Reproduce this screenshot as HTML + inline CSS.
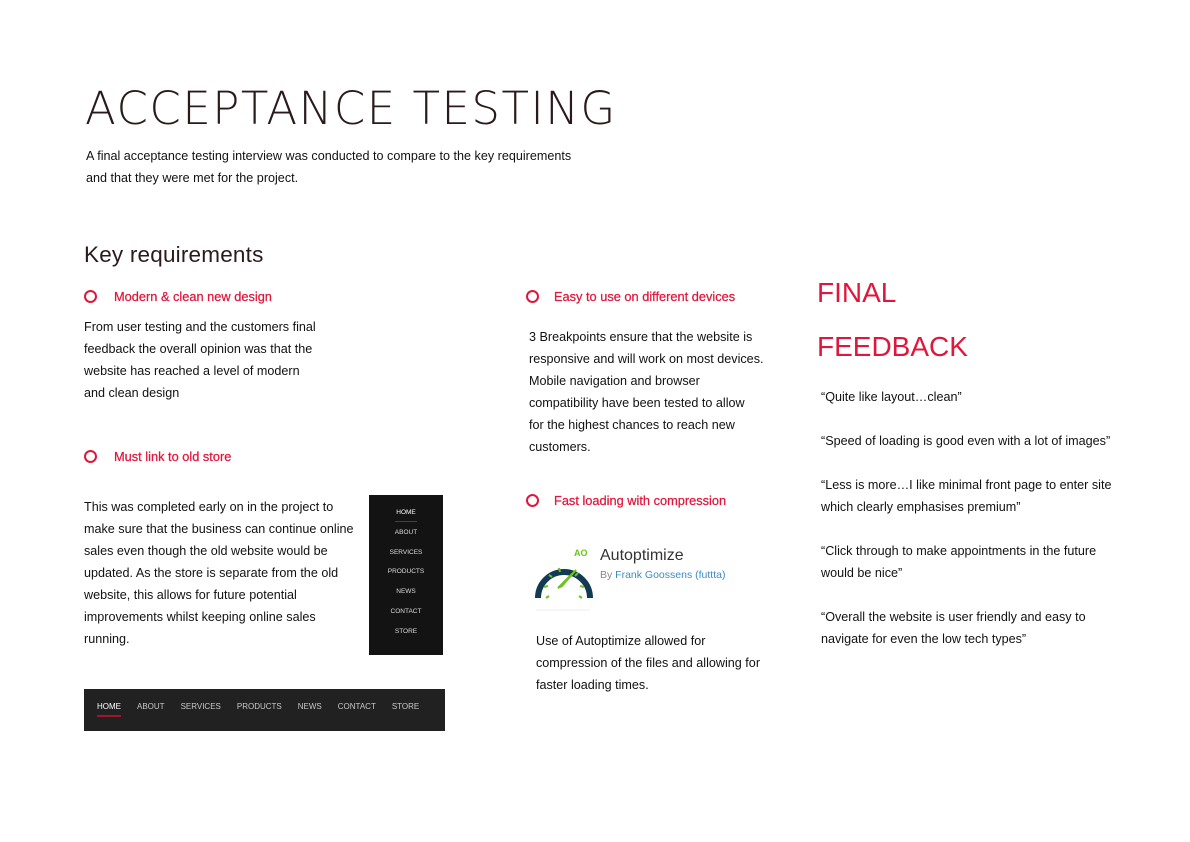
<!DOCTYPE html>
<html><head><meta charset="utf-8"><style>
*{margin:0;padding:0;box-sizing:border-box}
body{width:1190px;height:842px;background:#fff;position:relative;font-family:"Liberation Sans",sans-serif;color:#111;overflow:hidden}
.a{position:absolute}
.t{font-size:12.6px;line-height:22px;color:#111;white-space:nowrap}
h1{position:absolute;left:85px;top:82px;font-family:"DejaVu Sans",sans-serif;font-weight:200;font-size:45px;letter-spacing:1.5px;color:#2a1a1c;line-height:54px;white-space:nowrap}
.h2{font-family:"Liberation Sans",sans-serif;font-size:22.5px;color:#2a1a1c;letter-spacing:0.2px}
.b{font-size:12.8px;color:#e0173c;white-space:nowrap;-webkit-text-stroke:0.25px #e0173c}
.c{position:absolute;width:13px;height:13px;border:2px solid #e0173c;border-radius:50%}
.fb{font-family:"Liberation Sans",sans-serif;color:#e0173c;font-size:28px;line-height:54px}
.vn{background:#131313;color:#ddd;font-size:6.5px;text-align:center}
.vn div{height:19.8px;line-height:19.8px}
.hn{background:#212121;color:#c8c8c8;font-size:8px;display:flex;align-items:center;padding-left:13px;padding-bottom:8px}
.hn span{margin-right:16px}
</style></head><body>
<h1>ACCEPTANCE TESTING</h1>
<div class="a t" style="left:86px;top:145px">A final acceptance testing interview was conducted to compare to the key requirements<br>and that they were met for the project.</div>
<div class="a h2" style="left:84px;top:242px">Key requirements</div>

<div class="c" style="left:84px;top:290px"></div>
<div class="a b" style="left:114px;top:289px">Modern &amp; clean new design</div>
<div class="a t" style="left:84px;top:316px">From user testing and the customers final<br>feedback the overall opinion was that the<br>website has reached a level of modern<br>and clean design</div>

<div class="c" style="left:84px;top:450px"></div>
<div class="a b" style="left:114px;top:449px">Must link to old store</div>
<div class="a t" style="left:84px;top:496px">This was completed early on in the project to<br>make sure that the business can continue online<br>sales even though the old website would be<br>updated. As the store is separate from the old<br>website, this allows for future potential<br>improvements whilst keeping online sales<br>running.</div>

<div class="a vn" style="left:369px;top:495px;width:74px;height:160px;padding-top:8px">
<div style="color:#fff;position:relative">HOME<span style="position:absolute;left:26px;right:26px;bottom:1px;height:1px;background:#a0162e"></span></div><div>ABOUT</div><div>SERVICES</div><div>PRODUCTS</div><div>NEWS</div><div>CONTACT</div><div>STORE</div></div>

<div class="a hn" style="left:84px;top:689px;width:361px;height:42px">
<span style="color:#fff;position:relative">HOME<i style="position:absolute;left:0;right:0;bottom:-6px;height:2px;background:#a0162e"></i></span><span>ABOUT</span><span>SERVICES</span><span>PRODUCTS</span><span>NEWS</span><span>CONTACT</span><span>STORE</span></div>

<div class="c" style="left:526px;top:290px"></div>
<div class="a b" style="left:554px;top:289px">Easy to use on different devices</div>
<div class="a t" style="left:529px;top:326px">3 Breakpoints ensure that the website is<br>responsive and will work on most devices.<br>Mobile navigation and browser<br>compatibility have been tested to allow<br>for the highest chances to reach new<br>customers.</div>

<div class="c" style="left:526px;top:494px"></div>
<div class="a b" style="left:554px;top:493px">Fast loading with compression</div>

<svg class="a" style="left:534px;top:543px" width="60" height="70" viewBox="0 0 60 70">
<path d="M4 55 A26 26 0 1 1 56 55" fill="none" stroke="#123a52" stroke-width="6"/>
<g stroke="#6cc21e" stroke-width="2"><line x1="10" y1="44" x2="14" y2="43"/><line x1="15" y1="32" x2="18" y2="34"/><line x1="25" y1="25" x2="26" y2="29"/><line x1="44" y1="30" x2="41" y2="33"/><line x1="50" y1="44" x2="46" y2="43"/><line x1="12" y1="55" x2="15" y2="53"/><line x1="48" y1="55" x2="45" y2="53"/></g>
<path d="M24 45 L42 27 L28 43 Z" fill="#6cc21e" stroke="#6cc21e" stroke-width="2"/>
<text x="40" y="13" font-size="9" font-weight="bold" fill="#6cc21e" font-family="Liberation Sans">AO</text>
<line x1="2" y1="67" x2="56" y2="67" stroke="#eee" stroke-width="1"/>
</svg>
<div class="a" style="left:600px;top:547px;font-size:16px;color:#333">Autoptimize</div>
<div class="a" style="left:600px;top:569px;font-size:10.5px;color:#888">By <span style="color:#3a8cc4">Frank Goossens (futtta)</span></div>
<div class="a t" style="left:536px;top:630px">Use of Autoptimize allowed for<br>compression of the files and allowing for<br>faster loading times.</div>

<div class="a fb" style="left:817px;top:266px">FINAL<br>FEEDBACK</div>
<div class="a t" style="left:821px;top:386px">“Quite like layout…clean”<br><br>“Speed of loading is good even with a lot of images”<br><br>“Less is more…I like minimal front page to enter site<br>which clearly emphasises premium”<br><br>“Click through to make appointments in the future<br>would be nice”<br><br>“Overall the website is user friendly and easy to<br>navigate for even the low tech types”</div>
</body></html>
